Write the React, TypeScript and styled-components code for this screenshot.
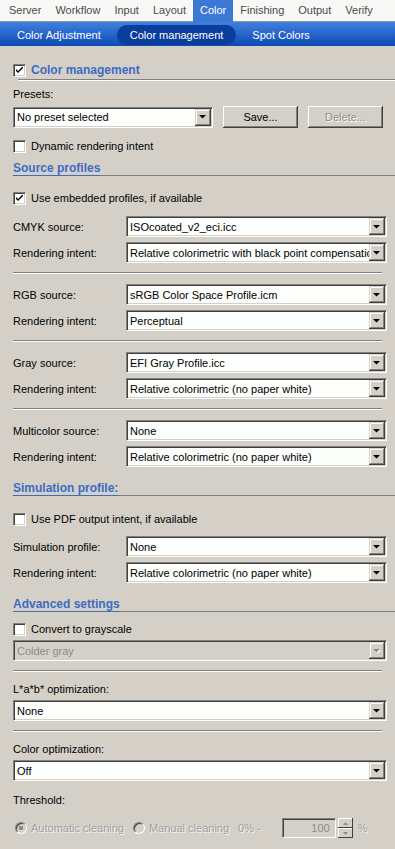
import { FC, ReactNode } from 'react'
import styled, { createGlobalStyle } from 'styled-components'

const topTabs = ['Server', 'Workflow', 'Input', 'Layout', 'Color', 'Finishing', 'Output', 'Verify']
const subTabs = ['Color Adjustment', 'Color management', 'Spot Colors']

const sourceGroups = [
  { label: 'CMYK source:', value: 'ISOcoated_v2_eci.icc', intent: 'Relative colorimetric with black point compensation' },
  { label: 'RGB source:', value: 'sRGB Color Space Profile.icm', intent: 'Perceptual' },
  { label: 'Gray source:', value: 'EFI Gray Profile.icc', intent: 'Relative colorimetric (no paper white)' },
  { label: 'Multicolor source:', value: 'None', intent: 'Relative colorimetric (no paper white)' }
]

const Arrow = ({ disabled }: { disabled?: boolean }) => (
  <svg width="8" height="5" viewBox="0 0 8 5">
    {disabled && <polygon points="1,1 8,1 4.5,4.5" fill="#fff" />}
    <polygon points="0,0 7,0 3.5,3.5" fill={disabled ? '#8c8c8c' : '#000'} />
  </svg>
)

const Select: FC<{ value: string; disabled?: boolean; className?: string }> = ({ value, disabled, className }) => (
  <SelectBox $disabled={disabled} className={className}>
    <SelectText $disabled={disabled}>{value}</SelectText>
    <DropButton>
      <Arrow disabled={disabled} />
    </DropButton>
  </SelectBox>
)

const Checkbox: FC<{ checked?: boolean; children: ReactNode; bold?: boolean }> = ({ checked, children, bold }) => (
  <CheckRow>
    <CheckBoxSquare>
      {checked && (
        <svg width="7" height="7" viewBox="0 0 7 7">
          <path d="M0 2 L0 4 L2 6 L7 1 L7 -1 L2 4 Z" fill="#000" />
        </svg>
      )}
    </CheckBoxSquare>
    {bold ? <SectionTitle>{children}</SectionTitle> : <span>{children}</span>}
  </CheckRow>
)

const Header: FC<{ children: ReactNode; $top?: number }> = ({ children, $top }) => (
  <HeaderRow $top={$top}>
    <HeaderTitle>{children}</HeaderTitle>
    <HeaderRule />
  </HeaderRow>
)

const FieldRow: FC<{ label: string; value: string; $top?: number }> = ({ label, value, $top }) => (
  <Row $top={$top}>
    <FieldLabel>{label}</FieldLabel>
    <Select value={value} />
  </Row>
)

const App = () => (
  <Page>
    <GlobalStyle />
    <TopBar>
      {topTabs.map((t) => (
        <TopTab key={t} $active={t === 'Color'}>
          {t}
        </TopTab>
      ))}
    </TopBar>
    <SubBar>
      {subTabs.map((t) => (
        <SubTab key={t} $active={t === 'Color management'}>
          {t}
        </SubTab>
      ))}
    </SubBar>

    <Body>
      <Spaced $top={16}>
        <Checkbox checked bold>
          Color management
        </Checkbox>
      </Spaced>
      <TopRule />
      <Label $top={7}>Presets:</Label>
      <Row $top={5}>
        <PresetSelect value="No preset selected" />
        <Button>Save...</Button>
        <Button disabled>Delete...</Button>
      </Row>
      <Spaced $top={10}>
        <Checkbox>Dynamic rendering intent</Checkbox>
      </Spaced>

      <Header $top={8}>Source profiles</Header>
      <Spaced $top={14}>
        <Checkbox checked>Use embedded profiles, if available</Checkbox>
      </Spaced>
      {sourceGroups.map((g, i) => (
        <div key={g.label}>
          {i > 0 && <Separator />}
          <FieldRow $top={10} label={g.label} value={g.value} />
          <FieldRow $top={5} label="Rendering intent:" value={g.intent} />
        </div>
      ))}

      <Header $top={15}>Simulation profile:</Header>
      <Spaced $top={15}>
        <Checkbox>Use PDF output intent, if available</Checkbox>
      </Spaced>
      <FieldRow $top={9} label="Simulation profile:" value="None" />
      <FieldRow $top={5} label="Rendering intent:" value="Relative colorimetric (no paper white)" />

      <Header $top={15}>Advanced settings</Header>
      <Spaced $top={9}>
        <Checkbox>Convert to grayscale</Checkbox>
      </Spaced>
      <Row $top={3}>
        <Select value="Colder gray" disabled />
      </Row>
      <Separator />
      <Label $top={11}>L*a*b* optimization:</Label>
      <Row $top={4}>
        <Select value="None" />
      </Row>
      <Separator />
      <Label $top={11}>Color optimization:</Label>
      <Row $top={4}>
        <Select value="Off" />
      </Row>
      <Label $top={13}>Threshold:</Label>

      <RadioRow>
        <RadioItem>
          <Radio $checked />
          Automatic cleaning
        </RadioItem>
        <RadioItem>
          <Radio />
          Manual cleaning
        </RadioItem>
        <span>0% -</span>
        <SpinInput>100</SpinInput>
        <Spinner>
          <SpinButton>
            <svg width="5" height="3" viewBox="0 0 5 3">
              <polygon points="2.5,0 5,3 0,3" fill="#8c8c8c" />
            </svg>
          </SpinButton>
          <SpinButton>
            <svg width="5" height="3" viewBox="0 0 5 3">
              <polygon points="0,0 5,0 2.5,3" fill="#8c8c8c" />
            </svg>
          </SpinButton>
        </Spinner>
        <Unit>%</Unit>
      </RadioRow>
    </Body>
  </Page>
)

export default App

const GlobalStyle = createGlobalStyle`
  html, body {
    margin: 0;
    padding: 0;
    background: #d4d0c8;
  }
  body {
    font-family: "Liberation Sans", Arial, sans-serif;
    font-size: 11px;
    color: #000;
  }
  * {
    box-sizing: border-box;
  }
`

const Page = styled.div`
  width: 395px;
  min-height: 849px;
  background: #d4d0c8;
  overflow: hidden;
`

const TopBar = styled.div`
  display: flex;
  height: 22px;
  padding-left: 2px;
  background: #f8f8f6;
  border-bottom: 1px solid #8e98aa;
`

const TopTab = styled.div<{ $active?: boolean }>`
  padding: 0 7px;
  line-height: 21px;
  height: 22px;
  color: ${({ $active }) => ($active ? '#fff' : '#4a4a4a')};
  background: ${({ $active }) => ($active ? '#3c79d6' : 'transparent')};
`

const SubBar = styled.div`
  display: flex;
  align-items: center;
  gap: 3px;
  height: 24px;
  padding: 2px 0 0 4px;
  background: linear-gradient(#3f80dc, #2a68cc 45%, #0c4ab4);
`

const SubTab = styled.div<{ $active?: boolean }>`
  height: 20px;
  line-height: 20px;
  padding: 0 13px;
  border-radius: 10px;
  color: #fff;
  background: ${({ $active }) => ($active ? '#0b3d9c' : 'transparent')};
`

const Body = styled.div`
  padding: 0 0 20px 13px;
`

const Spaced = styled.div<{ $top?: number }>`
  margin-top: ${({ $top }) => $top ?? 0}px;
`

const Row = styled.div<{ $top?: number }>`
  display: flex;
  align-items: center;
  gap: 10px;
  margin-top: ${({ $top }) => $top ?? 0}px;
  margin-right: 8px;
`

const Label = styled.div<{ $top?: number }>`
  height: 13px;
  line-height: 13px;
  margin-top: ${({ $top }) => $top ?? 0}px;
`

const FieldLabel = styled.div`
  width: 103px;
  flex-shrink: 0;
`

const CheckRow = styled.div`
  display: flex;
  align-items: center;
  gap: 5px;
  height: 16px;
`

const CheckBoxSquare = styled.span`
  width: 13px;
  height: 13px;
  display: flex;
  align-items: center;
  justify-content: center;
  background: #fff;
  border-top: 1px solid #808080;
  border-left: 1px solid #808080;
  border-right: 1px solid #fff;
  border-bottom: 1px solid #fff;
  box-shadow: inset 1px 1px 0 #404040, inset -1px -1px 0 #d4d0c8;
`

const SectionTitle = styled.span`
  font-weight: bold;
  font-size: 12px;
  color: #3d6cc0;
`

const TopRule = styled.div`
  margin: 1px 0 0 5px;
  height: 2px;
  border-top: 1px solid #808080;
  border-bottom: 1px solid #fff;
`

const HeaderRow = styled.div<{ $top?: number }>`
  display: flex;
  align-items: flex-end;
  margin-top: ${({ $top }) => $top ?? 0}px;
`

const HeaderTitle = styled.div`
  font-weight: bold;
  font-size: 12px;
  line-height: 13px;
  color: #3d6cc0;
  border-bottom: 1px solid #3d6cc0;
`

const HeaderRule = styled.div`
  flex: 1;
  border-bottom: 1px solid #808080;
`

const Separator = styled.div`
  margin: 9px 13px 0 0;
  height: 2px;
  border-top: 1px solid #808080;
  border-bottom: 1px solid #fff;
`

const SelectBox = styled.div<{ $disabled?: boolean }>`
  flex: 1;
  min-width: 0;
  height: 21px;
  display: flex;
  align-items: center;
  padding: 1px;
  background: ${({ $disabled }) => ($disabled ? '#d4d0c8' : '#fcfefc')};
  border-top: 1px solid #808080;
  border-left: 1px solid #808080;
  border-right: 1px solid #fff;
  border-bottom: 1px solid #fff;
  box-shadow: inset 1px 1px 0 #404040, inset -1px -1px 0 #d4d0c8;
`

const PresetSelect = styled(Select)`
  flex: 0 0 200px;
`

const SelectText = styled.span<{ $disabled?: boolean }>`
  flex: 1;
  min-width: 0;
  padding-left: 2px;
  white-space: nowrap;
  overflow: hidden;
  color: ${({ $disabled }) => ($disabled ? '#8c8c8c' : '#000')};
`

const DropButton = styled.span`
  width: 16px;
  height: 17px;
  flex-shrink: 0;
  display: flex;
  align-items: center;
  justify-content: center;
  padding-top: 1px;
  background: #d4d0c8;
  box-shadow: inset -1px -1px 0 #404040, inset 1px 1px 0 #d4d0c8, inset -2px -2px 0 #808080, inset 2px 2px 0 #fff;
`

const Button = styled.button`
  width: 75px;
  height: 22px;
  padding: 0;
  font: inherit;
  color: ${({ disabled }) => (disabled ? '#8c8c8c' : '#000')};
  text-shadow: ${({ disabled }) => (disabled ? '1px 1px 0 #fff' : 'none')};
  background: #d4d0c8;
  border: none;
  box-shadow: inset -1px -1px 0 #404040, inset 1px 1px 0 #fff, inset -2px -2px 0 #808080, inset 2px 2px 0 #d4d0c8;
`

const RadioRow = styled.div`
  display: flex;
  align-items: center;
  height: 20px;
  margin-top: 11px;
  padding-left: 2px;
  color: #a0a0a0;
  text-shadow: 1px 1px 0 #f4f4f0;
`

const RadioItem = styled.div`
  display: flex;
  align-items: center;
  gap: 4px;
  margin-right: 9px;
`

const Radio = styled.span<{ $checked?: boolean }>`
  width: 12px;
  height: 12px;
  border-radius: 50%;
  background: ${({ $checked }) => ($checked ? 'radial-gradient(circle, #8c8c8c 0 2px, #d4d0c8 2.5px)' : '#d4d0c8')};
  border: 1px solid;
  border-color: #808080 #fff #fff #808080;
  box-shadow: inset 1px 1px 0 #404040;
`

const SpinInput = styled.div`
  width: 54px;
  height: 20px;
  margin-left: 21px;
  padding-right: 5px;
  line-height: 18px;
  text-align: right;
  color: #8c8c8c;
  text-shadow: none;
  border-top: 1px solid #808080;
  border-left: 1px solid #808080;
  border-right: 1px solid #fff;
  border-bottom: 1px solid #fff;
  box-shadow: inset 1px 1px 0 #404040, inset -1px -1px 0 #d4d0c8;
`

const Spinner = styled.div`
  display: flex;
  flex-direction: column;
  margin-left: 2px;
`

const SpinButton = styled.span`
  width: 15px;
  height: 10px;
  display: flex;
  align-items: center;
  justify-content: center;
  background: #d4d0c8;
  box-shadow: inset -1px -1px 0 #404040, inset 1px 1px 0 #fff;
`

const Unit = styled.span`
  margin-left: 5px;
`
